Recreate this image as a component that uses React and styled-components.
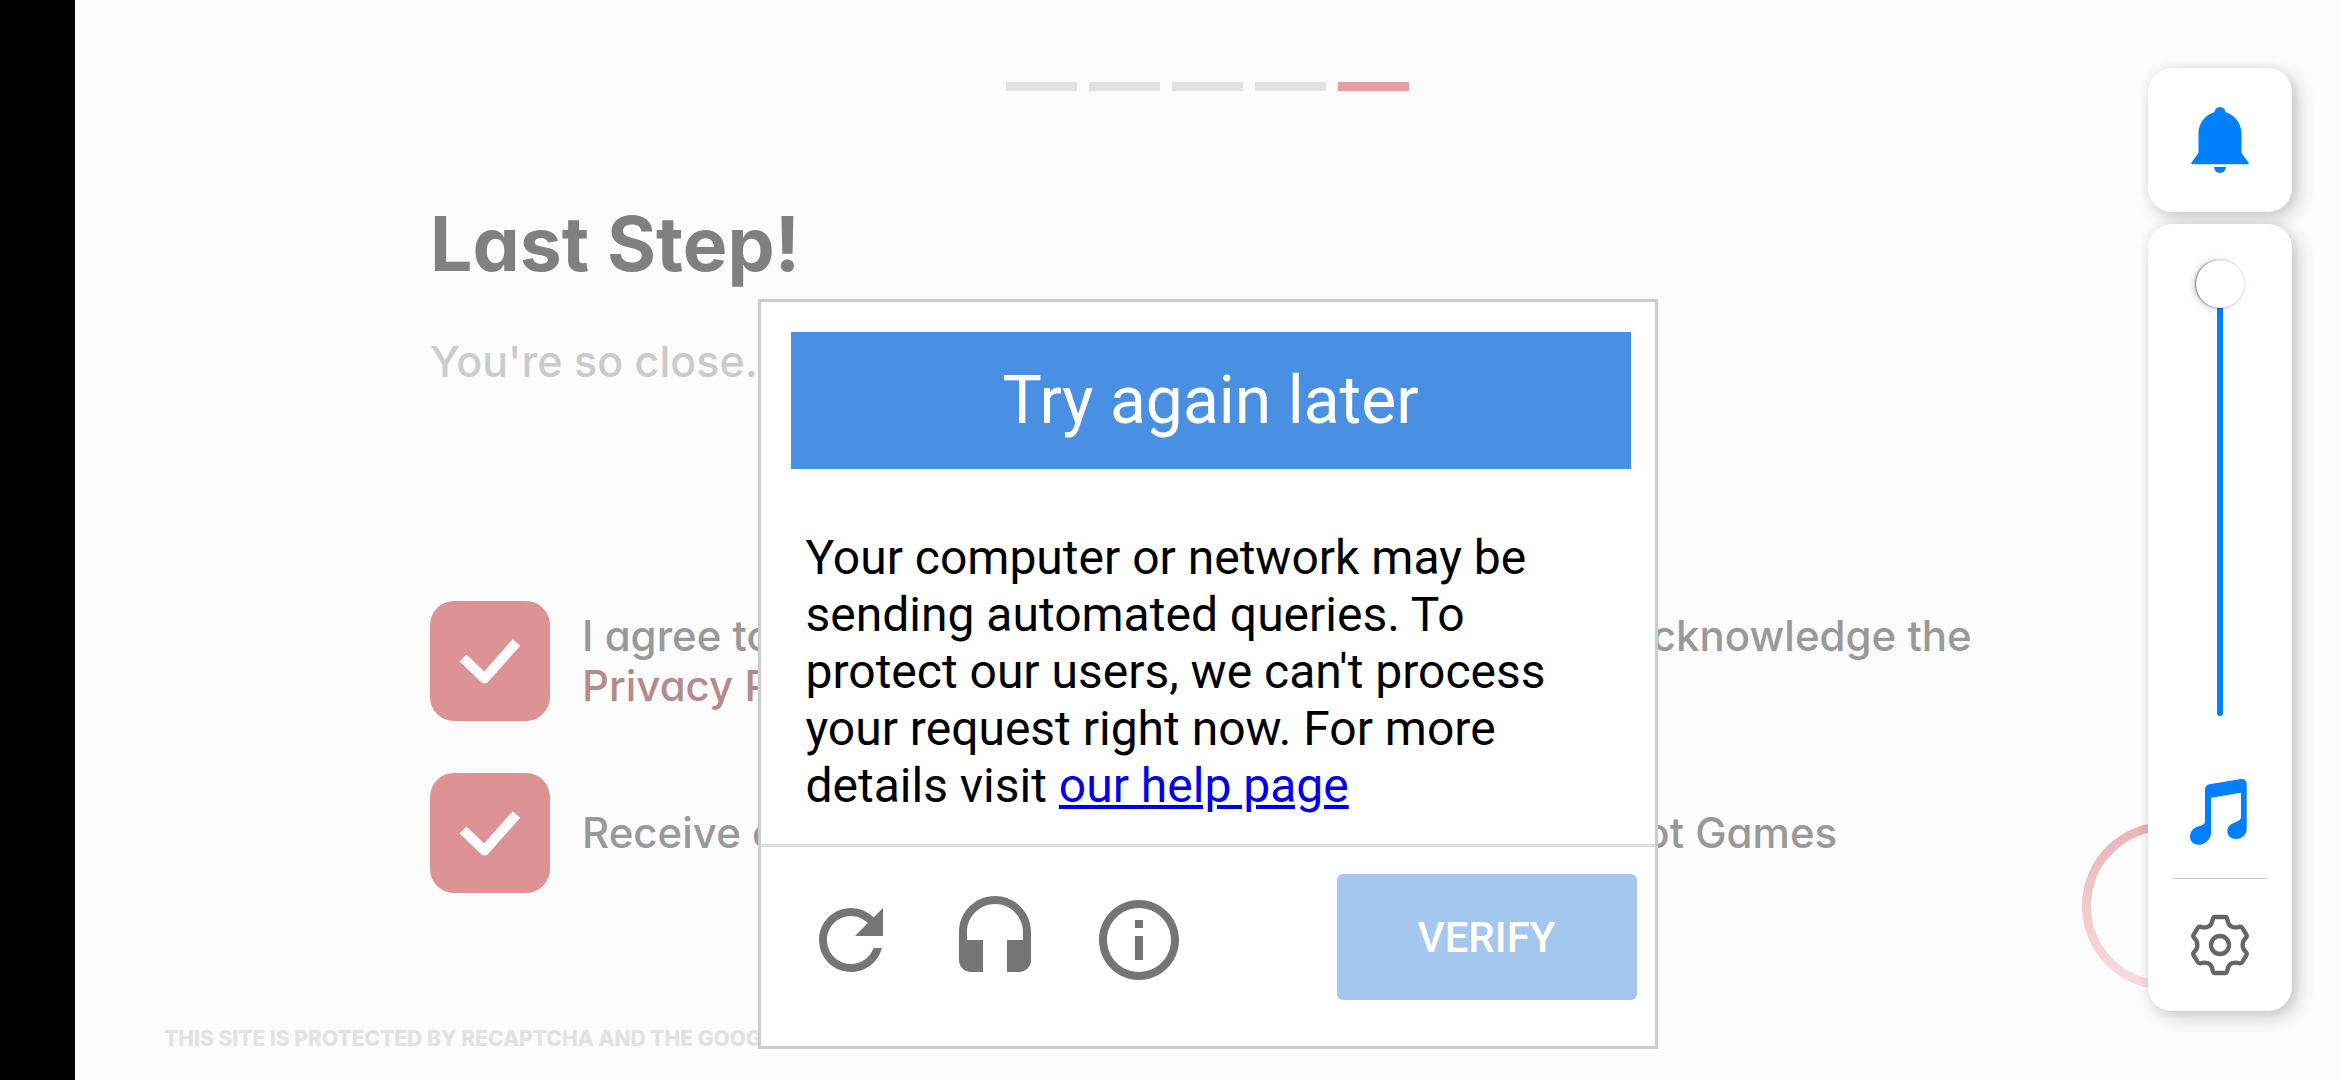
import React, { useState } from "react";
import styled, { createGlobalStyle } from "styled-components";

const GlobalStyle = createGlobalStyle`
  *, *::before, *::after { box-sizing: border-box; }
  body { margin: 0; background: #000; }
  h1, h2, p { margin: 0; font-weight: inherit; }
  button { border: 0; padding: 0; background: none; font: inherit; cursor: pointer; }
`;

const Screen = styled.div`
  position: relative;
  min-height: 100vh;
  padding-left: 75px;
  background: #000;
  overflow: hidden;
`;

const Page = styled.div`
  position: relative;
  display: flex;
  flex-direction: column;
  min-height: 100vh;
  padding: 82px 89px 29px;
  background: #fcfcfc;
  font-family: Inter, "Liberation Sans", sans-serif;
  font-feature-settings: "cv11";
`;

const Steps = styled.div`
  display: flex;
  justify-content: center;
  gap: 12px;
`;

const Step = styled.span`
  width: 71px;
  height: 9px;
  background: ${(p) => (p.$active ? "#e89c9e" : "#e2e2e2")};
`;

const Content = styled.main`
  width: 100%;
  max-width: 1555px;
  margin: 111px auto 0;
`;

const Title = styled.h1`
  font-size: 75px;
  line-height: 84px;
  font-weight: 700;
  color: #808080;
`;

const Subtitle = styled.p`
  margin-top: 50px;
  font-size: 43px;
  line-height: 50px;
  font-weight: 500;
  color: #cbcbcb;
`;

const Consents = styled.div`
  display: flex;
  flex-direction: column;
  gap: 52px;
  margin-top: 215px;
`;

const Consent = styled.div`
  display: flex;
  align-items: center;
  gap: 32px;
`;

const Tick = styled.span`
  display: grid;
  flex: none;
  width: 120px;
  height: 120px;

  > * {
    grid-area: 1 / 1;
    width: 100%;
    height: 100%;
  }

  svg {
    pointer-events: none;
    visibility: hidden;
  }

  input:checked + svg {
    visibility: visible;
  }
`;

const TickInput = styled.input`
  appearance: none;
  margin: 0;
  border-radius: 24px;
  background: #dd9293;
`;

const ConsentLabel = styled.label`
  font-size: 42px;
  line-height: 50px;
  font-weight: 500;
  white-space: nowrap;
  color: #999;
`;

const PolicyLink = styled.a`
  color: #b48b8c;
  text-decoration: none;
`;

const Legal = styled.footer`
  margin-top: auto;
  font-size: 21px;
  line-height: 24px;
  font-weight: 800;
  text-transform: uppercase;
  color: #e2e2e2;
`;

const NextRing = styled.svg`
  position: absolute;
  right: 90px;
  top: 822px;
  width: 168px;
  height: 168px;
`;

const Overlay = styled.div`
  position: absolute;
  inset: 0;
  display: flex;
  justify-content: center;
  align-items: flex-start;
  padding-top: 299px;
`;

const Dialog = styled.section`
  width: 900px;
  border: 3px solid #ccc;
  background: #fff;
  font-family: Roboto, "Liberation Sans", sans-serif;
`;

const Banner = styled.h2`
  margin: 30px 24px 0 30px;
  padding: 30px;
  background: #4a90e2;
  color: #fff;
  font-size: 66px;
  line-height: 77px;
  font-weight: 400;
  text-align: center;
`;

const Message = styled.p`
  padding: 60px 45px 30px;
  font-size: 48px;
  line-height: 57px;
  color: #000;

  a {
    color: #0000ee;
  }
`;

const Controls = styled.div`
  display: flex;
  align-items: flex-start;
  justify-content: space-between;
  padding: 27px 18px 46px 42px;
  border-top: 3px solid #dfdfdf;
`;

const IconGroup = styled.div`
  display: flex;
  gap: 48px;
  padding-top: 18px;
`;

const IconButton = styled.button`
  display: grid;
  place-items: center;
  width: ${(p) => p.$size}px;
  height: ${(p) => p.$size}px;

  svg {
    width: 100%;
    height: 100%;
    fill: #757575;
  }
`;

const VerifyButton = styled.button`
  && {
    width: 300px;
    height: 126px;
    border-radius: 6px;
    background: #a4c7f0;
    color: #fff;
    font-size: 42px;
    font-weight: 500;
  }
`;

const Dock = styled.aside`
  position: absolute;
  top: 68px;
  right: 48px;
  display: flex;
  flex-direction: column;
  gap: 12px;
`;

const DockCard = styled.div`
  display: flex;
  flex-direction: column;
  align-items: center;
  width: 144px;
  padding: 36px 36px ${(p) => (p.$tall ? 30 : 36)}px;
  border-radius: 24px;
  background: #fff;
  box-shadow: 6px 6px 18px rgba(0, 0, 0, 0.2), 0 0 12px rgba(0, 0, 0, 0.06);
`;

const Volume = styled.input`
  appearance: none;
  writing-mode: vertical-lr;
  direction: rtl;
  width: 48px;
  height: 456px;
  margin: 0 0 60px;
  background: none;

  &::-webkit-slider-runnable-track {
    width: 6px;
    border-radius: 3px;
    background: #007fff;
  }

  &::-webkit-slider-thumb {
    appearance: none;
    width: 48px;
    height: 48px;
    margin-left: -21px;
    border-radius: 50%;
    background: #fff;
    box-shadow: -1px 0 2px rgba(0, 0, 0, 0.5), -2px 1px 8px rgba(0, 0, 0, 0.15);
  }
`;

const Divider = styled.hr`
  width: 96px;
  height: 1px;
  margin: 30px 0;
  border: 0;
  background: #ccc;
`;

const CONSENTS = [
  {
    id: "terms",
    text: "I agree to the Riot Games Inc. Terms of Service and acknowledge the",
    link: "Privacy Policy",
  },
  {
    id: "news",
    text: "Receive communications relating to products from Riot Games",
  },
];

function Checkbox({ id }) {
  return (
    <Tick>
      <TickInput type="checkbox" id={id} defaultChecked />
      <svg viewBox="0 0 120 120" aria-hidden="true">
        <path d="M33 57 54.500 77.500 86.500 41.500" fill="none" stroke="#fcfcfc" strokeWidth="10" strokeLinejoin="round" />
      </svg>
    </Tick>
  );
}

const BellIcon = () => (
  <svg viewBox="0 0 72 72" aria-hidden="true">
    <g fill="#007fff">
      <circle cx="36" cy="8.500" r="5.500" />
      <path d="M14.500 49V29.500C14.500 17.500 24 7.500 36 7.500S57.500 17.500 57.500 29.500V49L64.500 58.500c.7.900.1 1.800-1 1.800H8.500c-1.100 0-1.700-.9-1-1.800z" />
      <path d="M30 63h12a6 6 0 0 1-12 0z" />
    </g>
  </svg>
);

const MusicIcon = () => (
  <svg viewBox="0 0 72 72" aria-hidden="true">
    <path
      fill="#007fff"
      d="M27 21.700 57 16.700V41C57 43 55 45 52 46C47 47.500 43.300 50.500 43.300 55C43.300 59.800 47 63 52 63C58 63 62.700 58.500 62.700 53V8C62.700 4.500 60 2.600 57 3.100L25.500 8.300C23 8.800 21 10.500 21 13.500V46.500C19.500 49 18 49.500 15 50.200C9.500 51.500 6 55.500 6 60.500C6 65.500 9.800 68.700 14.500 68.700C21.500 68.700 27 63 27 57Z"
    />
  </svg>
);

const GearIcon = () => (
  <svg viewBox="-108 -108 216 216" aria-hidden="true">
    <g fill="none" stroke="#666" strokeWidth="13" strokeLinejoin="round">
      <circle r="27" />
      <path d="M-15-84H15Q20-84 21-79L25-66Q28-57 38-54Q48-51 58-55Q64-56 67-51L79-31Q82-26 78-22L71-13Q68-8 68 0Q68 8 71 13L78 22Q82 26 79 31L67 51Q64 56 58 55Q48 51 38 54Q28 57 25 66L21 79Q20 84 15 84H-15Q-20 84-21 79L-25 66Q-28 57-38 54Q-48 51-58 55Q-64 56-67 51L-79 31Q-82 26-78 22L-71 13Q-68 8-68 0Q-68-8-71-13L-78-22Q-82-26-79-31L-67-51Q-64-56-58-55Q-48-51-38-54Q-28-57-25-66L-21-79Q-20-84-15-84Z" />
    </g>
  </svg>
);

const CHALLENGE_ICONS = [
  {
    label: "Get a new challenge",
    path: "M17.65 6.35C16.2 4.9 14.21 4 12 4c-4.42 0-7.99 3.58-7.99 8s3.57 8 7.99 8c3.73 0 6.84-2.55 7.73-6h-2.08c-.82 2.33-3.04 4-5.65 4-3.31 0-6-2.69-6-6s2.69-6 6-6c1.66 0 3.14.69 4.22 1.78L13 11h7V4l-2.35 2.35z",
  },
  {
    label: "Get an audio challenge",
    path: "M12 1c-4.97 0-9 4.03-9 9v7c0 1.66 1.34 3 3 3h3v-8H5v-2c0-3.87 3.13-7 7-7s7 3.13 7 7v2h-4v8h3c1.66 0 3-1.34 3-3v-7c0-4.97-4.03-9-9-9z",
  },
  {
    label: "Help",
    path: "M11 17h2v-6h-2v6zm1-15C6.48 2 2 6.48 2 12s4.48 10 10 10 10-4.48 10-10S17.52 2 12 2zm0 18c-4.41 0-8-3.59-8-8s3.59-8 8-8 8 3.59 8 8-3.59 8-8 8zM11 9h2V7h-2v2z",
  },
];

export default function App() {
  const [volume, setVolume] = useState(100);

  return (
    <Screen>
      <GlobalStyle />
      <Page>
        <Steps>
          {[1, 2, 3, 4, 5].map((n) => (
            <Step key={n} $active={n === 5} />
          ))}
        </Steps>
        <Content>
          <Title>Last Step!</Title>
          <Subtitle>You're so close.</Subtitle>
          <Consents>
            {CONSENTS.map((c) => (
              <Consent key={c.id}>
                <Checkbox id={c.id} />
                <ConsentLabel htmlFor={c.id}>
                  {c.text}
                  {c.link && (
                    <>
                      <br />
                      <PolicyLink href="#privacy">{c.link}</PolicyLink>
                    </>
                  )}
                </ConsentLabel>
              </Consent>
            ))}
          </Consents>
        </Content>
        <Legal>This site is protected by reCAPTCHA and the Google Privacy Policy and Terms of Service apply.</Legal>
        <NextRing viewBox="0 0 168 168" aria-hidden="true">
          <defs>
            <linearGradient id="ring" x1="0" y1="0" x2="0" y2="1">
              <stop offset="0" stopColor="#ecb4b7" />
              <stop offset="1" stopColor="#f7dddf" />
            </linearGradient>
          </defs>
          <circle cx="84" cy="84" r="79.500" fill="none" stroke="url(#ring)" strokeWidth="9" />
        </NextRing>
        <Overlay>
          <Dialog role="dialog" aria-labelledby="dialog-title">
            <Banner id="dialog-title">Try again later</Banner>
            <Message>
              Your computer or network may be sending automated queries. To protect our users, we can't process your
              request right now. For more details visit <a href="#help">our help page</a>
            </Message>
            <Controls>
              <IconGroup>
                {CHALLENGE_ICONS.map((icon) => (
                  <IconButton key={icon.label} $size={96} aria-label={icon.label}>
                    <svg viewBox="0 0 24 24" aria-hidden="true">
                      <path d={icon.path} />
                    </svg>
                  </IconButton>
                ))}
              </IconGroup>
              <VerifyButton>VERIFY</VerifyButton>
            </Controls>
          </Dialog>
        </Overlay>
      </Page>
      <Dock>
        <DockCard>
          <IconButton $size={72} aria-label="Notifications">
            <BellIcon />
          </IconButton>
        </DockCard>
        <DockCard $tall>
          <Volume
            type="range"
            min="0"
            max="100"
            value={volume}
            onChange={(e) => setVolume(Number(e.target.value))}
            aria-label="Media volume"
          />
          <IconButton $size={72} aria-label="Media">
            <MusicIcon />
          </IconButton>
          <Divider />
          <IconButton $size={72} aria-label="Sound settings">
            <GearIcon />
          </IconButton>
        </DockCard>
      </Dock>
    </Screen>
  );
}
